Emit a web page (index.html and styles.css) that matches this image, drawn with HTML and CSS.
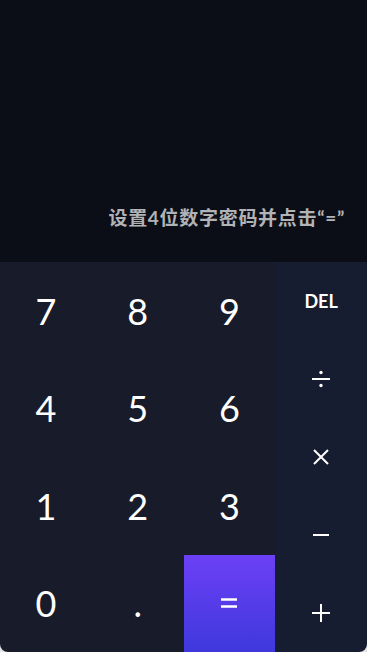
FILE: index.html
```html
<!DOCTYPE html>
<html lang="zh">
<head>
<meta charset="utf-8">
<title>计算器</title>
<link rel="stylesheet" href="styles.css">
</head>
<body>
<div class="app">
  <div class="screen">
    <p class="hint">设置4位数字密码并点击“=”</p>
  </div>
  <div class="keypad">
    <div class="digits">
      <div class="key">7</div>
      <div class="key">8</div>
      <div class="key">9</div>
      <div class="key">4</div>
      <div class="key">5</div>
      <div class="key">6</div>
      <div class="key">1</div>
      <div class="key">2</div>
      <div class="key">3</div>
      <div class="key">0</div>
      <div class="key">.</div>
      <div class="key equal">
        <svg width="16" height="10" viewBox="0 0 16 10"><path d="M0 1.5H16M0 8.5H16" stroke="#fff" stroke-width="2.4"/></svg>
      </div>
    </div>
    <div class="ops">
      <div class="op del">DEL</div>
      <div class="op">
        <svg width="18" height="18" viewBox="0 0 18 18"><path d="M0 9H18" stroke="#fff" stroke-width="2"/><circle cx="9" cy="2.5" r="1.7" fill="#fff"/><circle cx="9" cy="15.5" r="1.7" fill="#fff"/></svg>
      </div>
      <div class="op">
        <svg width="18" height="18" viewBox="0 0 18 18"><path d="M2 2L16 16M16 2L2 16" stroke="#fff" stroke-width="2"/></svg>
      </div>
      <div class="op">
        <svg width="18" height="18" viewBox="0 0 18 18"><path d="M1 9H17" stroke="#fff" stroke-width="2"/></svg>
      </div>
      <div class="op">
        <svg width="18" height="18" viewBox="0 0 18 18"><path d="M0 9H18M9 0V18" stroke="#fff" stroke-width="2"/></svg>
      </div>
    </div>
  </div>
</div>
</body>
</html>
```
FILE: styles.css
```css
html, body {
  margin: 0;
  padding: 0;
  background: #e4e4e6;
}
.app {
  width: 367px;
  height: 652px;
  display: flex;
  flex-direction: column;
  border-radius: 0 0 8px 8px;
  overflow: hidden;
  font-family: Lato, "Noto Sans CJK SC", sans-serif;
  color: #fff;
}
.screen {
  flex: 0 0 262px;
  background: #0b0e16;
  display: flex;
  align-items: flex-end;
  justify-content: flex-end;
  padding: 0 22px 30px 0;
  box-sizing: border-box;
}
.hint {
  margin: 0;
  font-size: 19px;
  line-height: 28px;
  font-weight: 700;
  color: #b2b3b6;
  letter-spacing: 0.7px;
}
.keypad {
  flex: 1;
  display: grid;
  grid-template-columns: 3fr 1fr;
}
.digits {
  display: grid;
  grid-template-columns: repeat(3, 1fr);
  grid-template-rows: repeat(4, 1fr);
  background: #181b29;
}
.key {
  display: flex;
  align-items: center;
  justify-content: center;
  font-size: 36px;
  font-weight: 400;
}
.equal {
  background: linear-gradient(180deg, #6c40f6 0%, #3f38dc 100%);
}
.ops {
  display: grid;
  grid-template-rows: repeat(5, 1fr);
  background: #171d30;
}
.op {
  display: flex;
  align-items: center;
  justify-content: center;
}
.del {
  font-size: 18px;
  font-weight: 700;
}
```
